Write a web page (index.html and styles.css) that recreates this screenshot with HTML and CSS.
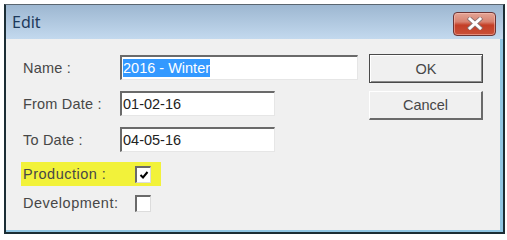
FILE: index.html
```html
<!DOCTYPE html>
<html>
<head>
<meta charset="utf-8">
<link rel="stylesheet" href="styles.css">
</head>
<body>
<div class="window">
  <div class="titlebar">
    <span class="title">Edit</span>
    <button class="close" aria-label="Close">
      <svg width="18" height="13" viewBox="0 0 18 13"><path d="M4 2 L14 11 M14 2 L4 11" stroke="#8a7070" stroke-width="4.5" stroke-linecap="square" fill="none"/><path d="M4 2 L14 11 M14 2 L4 11" stroke="#ffffff" stroke-width="3" stroke-linecap="square" fill="none"/></svg>
    </button>
  </div>
  <div class="client">
    <div class="form">
      <div class="row">
        <label class="label">Name :</label>
        <div class="input wide"><span class="sel">2016 - Winter</span></div>
      </div>
      <div class="row">
        <label class="label">From Date :</label>
        <div class="input">01-02-16</div>
      </div>
      <div class="row">
        <label class="label">To Date :</label>
        <div class="input">04-05-16</div>
      </div>
      <div class="check-row highlight">
        <label class="clabel">Production :</label>
        <span class="box">
          <svg width="12" height="12" viewBox="0 0 12 12"><path d="M2.5 6 L5 8.5 L9.5 3" stroke="#000" stroke-width="2" fill="none"/></svg>
        </span>
      </div>
      <div class="check-row">
        <label class="clabel">Development:</label>
        <span class="box"></span>
      </div>
    </div>
    <div class="buttons">
      <button class="btn default">OK</button>
      <button class="btn">Cancel</button>
    </div>
  </div>
</div>
</body>
</html>
```

FILE: styles.css
```css
html, body {
  margin: 0;
  padding: 0;
  background: #ffffff;
}

.window {
  margin: 4px 0 0 4px;
  width: 497px;
  height: 227px;
  border: 2px solid #1c2e35;
  border-top: 1px solid #5a6670;
  display: flex;
  flex-direction: column;
  background: #f0f0f0;
}

.titlebar {
  height: 34px;
  background: linear-gradient(#9db7d1, #c3d9ee);
  display: flex;
  align-items: center;
  justify-content: space-between;
  padding: 0 7px 0 6px;
  box-sizing: border-box;
}

.title {
  font-family: "Noto Sans", "DejaVu Sans", sans-serif;
  font-size: 16px;
  color: #1e3a5c;
  margin-top: -1px;
}

.close {
  width: 43px;
  height: 24px;
  margin-top: 3px;
  border: 1px solid #6b3535;
  border-radius: 4px;
  background: linear-gradient(#e3a596 0%, #d88270 40%, #c43e26 55%, #c9513a 100%);
  box-shadow: inset 0 0 0 1px rgba(255, 200, 190, 0.5);
  display: flex;
  align-items: center;
  justify-content: center;
  padding: 0;
}

.client {
  flex: 1;
  display: flex;
  padding: 16px 0 0 17px;
  border-right: 3px solid #8fc6e3;
  border-bottom: 2px solid #8fc6e3;
  font-family: "Liberation Sans", Arial, sans-serif;
  font-size: 14.5px;
  color: #474747;
}

.form {
  display: flex;
  flex-direction: column;
  gap: 11px;
}

.row {
  display: flex;
  align-items: center;
  height: 25px;
}

.label {
  width: 97px;
  letter-spacing: 0.2px;
}

.input {
  box-sizing: border-box;
  width: 155px;
  height: 25px;
  background: #ffffff;
  border-top: 2px solid #6a6a6a;
  border-left: 2px solid #6a6a6a;
  border-right: 1px solid #e6e6e6;
  border-bottom: 1px solid #e6e6e6;
  padding: 1px 0 0 1px;
  color: #222222;
  line-height: 20px;
}

.input.wide {
  width: 238px;
}

.sel {
  background: #3399ff;
  color: #ffffff;
  padding: 1px 0 1px 0;
}

.check-row {
  display: flex;
  align-items: center;
  height: 24px;
  margin-left: -2px;
  padding-left: 2px;
  width: 140px;
  box-sizing: border-box;
}

.check-row + .check-row {
  margin-top: -6px;
}

.highlight {
  margin-top: -1px;
  background: #f2f23a;
}

.clabel {
  width: 112px;
  letter-spacing: 0.5px;
}

.box {
  box-sizing: border-box;
  width: 16px;
  height: 17px;
  background: #ffffff;
  border-top: 2px solid #6a6a6a;
  border-left: 2px solid #6a6a6a;
  border-right: 1px solid #dcdcdc;
  border-bottom: 1px solid #dcdcdc;
  display: flex;
  align-items: center;
  justify-content: center;
}

.buttons {
  display: flex;
  flex-direction: column;
  gap: 8px;
  margin-left: 11px;
  margin-top: -1px;
}

.btn {
  box-sizing: border-box;
  width: 114px;
  height: 29px;
  background: #f0f0f0;
  border-top: 1px solid #ffffff;
  border-left: 1px solid #ffffff;
  border-right: 2px solid #6a6a6a;
  border-bottom: 2px solid #6a6a6a;
  font-family: "Liberation Sans", Arial, sans-serif;
  font-size: 14.5px;
  color: #474747;
  padding: 0;
}

.btn.default {
  border: 1px solid #4a4a4a;
  box-shadow: inset 1px 1px 0 #ffffff, inset -1px -1px 0 #8a8a8a;
}
```
